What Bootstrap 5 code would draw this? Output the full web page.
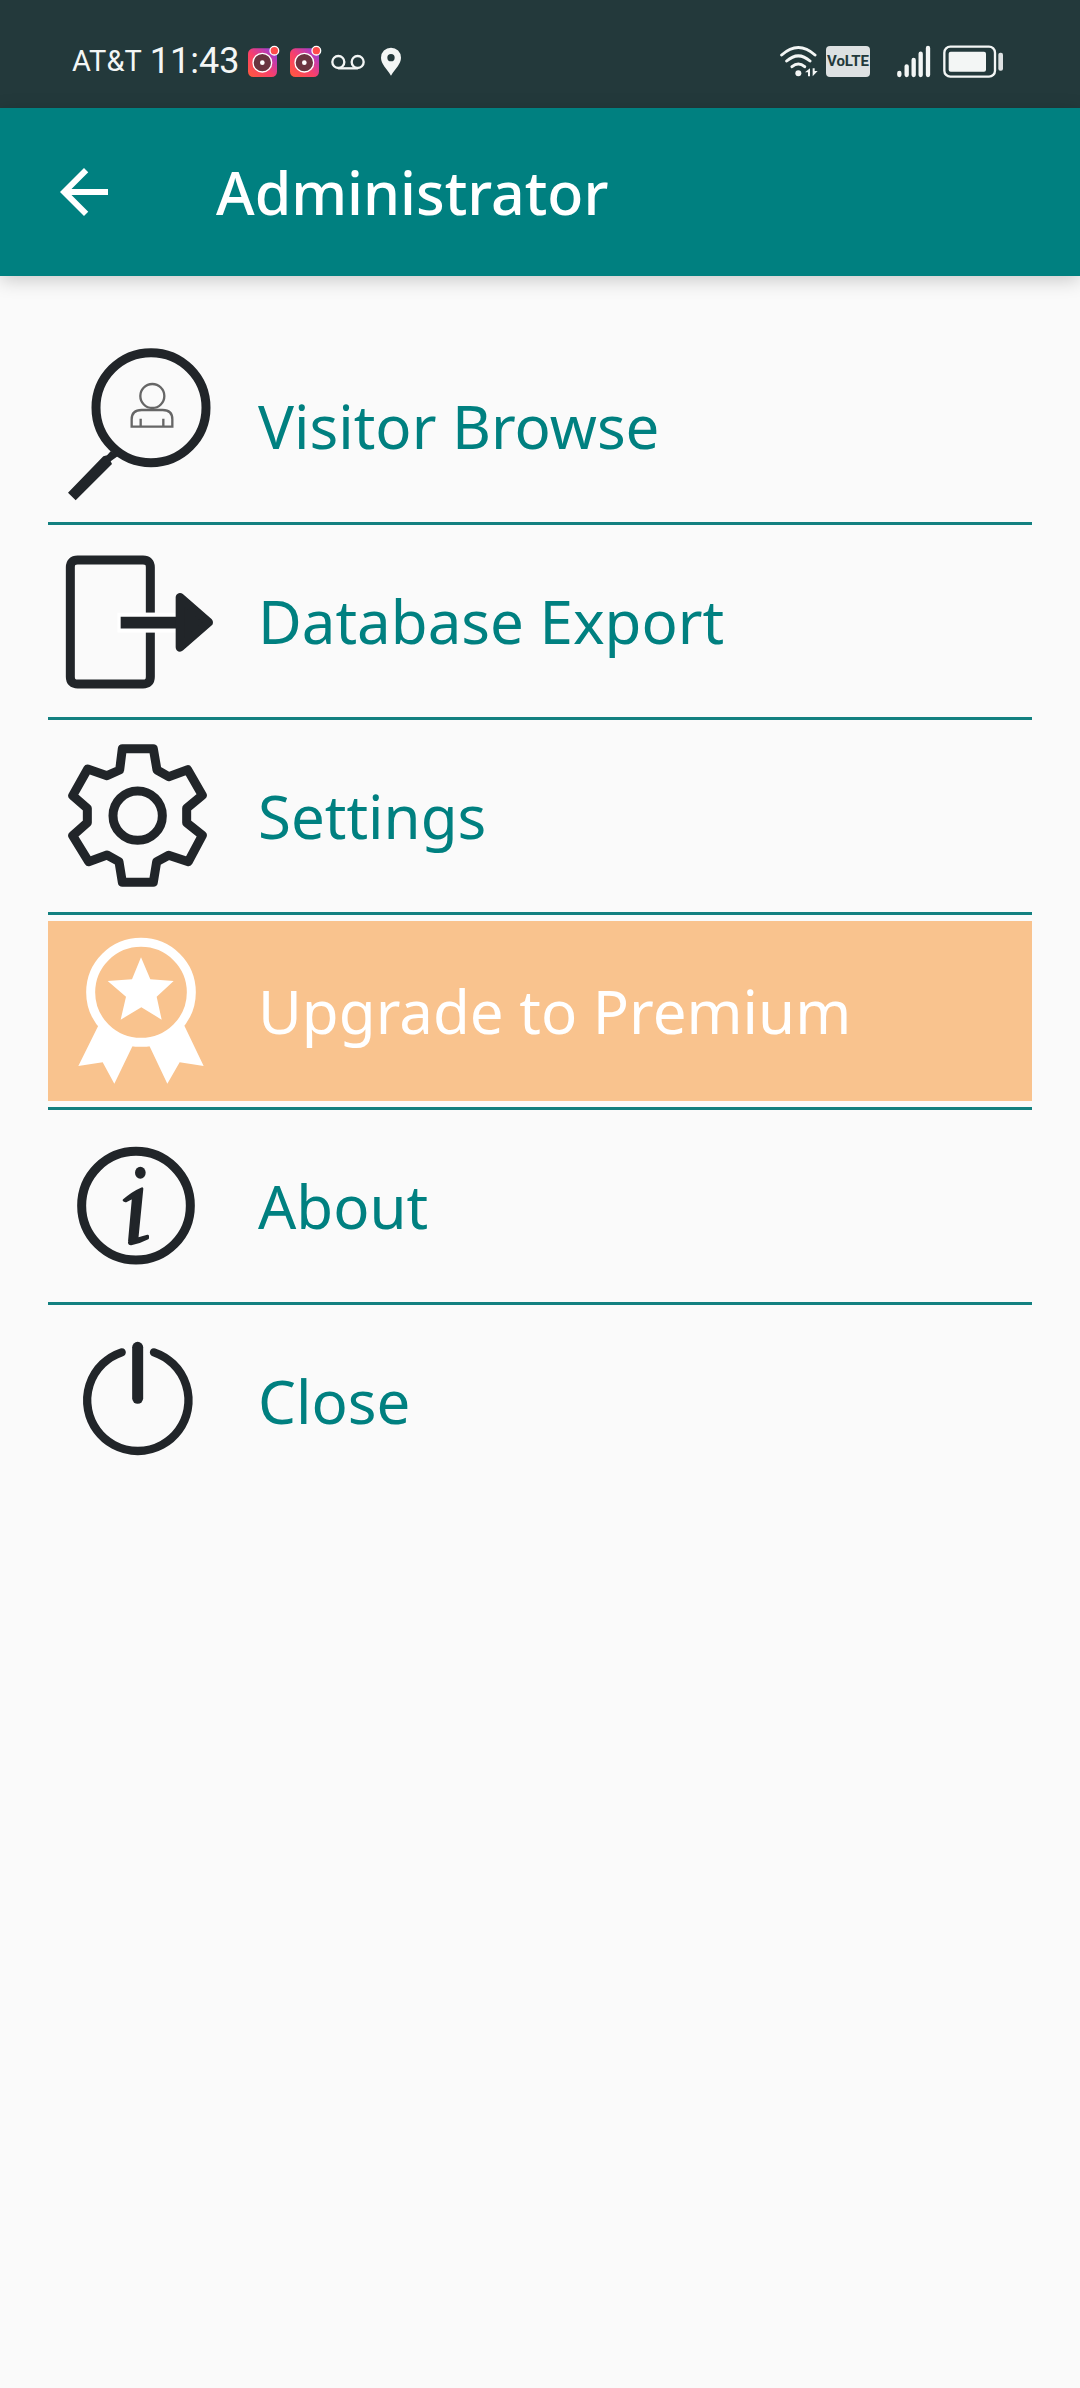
<!DOCTYPE html>
<html lang="en">
<head>
<meta charset="utf-8">
<meta name="viewport" content="width=device-width, initial-scale=1">
<title>Administrator</title>
<link rel="stylesheet" href="https://cdn.jsdelivr.net/npm/bootstrap@5.3.0/dist/css/bootstrap.min.css">
<style>
body { background: #fafafa; font-family: "Noto Sans", "Open Sans", sans-serif; }
.status-bar { height: 108px; padding: 14px 76px 0 72px; background: #23393b; color: #f3f6f5; font-family: Roboto, "Noto Sans", sans-serif; }
.status-bar svg { display: block; flex: none; }
.carrier { font-size: 29px; line-height: 40px; }
.clock { font-size: 36px; line-height: 40px; }
.volte { width: 44px; height: 31px; border-radius: 4px; background: #dde1e2; color: #23393b; font-size: 15px; line-height: 31px; font-weight: 700; text-align: center; }
.app-bar { height: 168px; padding: 0 48px; gap: 96px; background: #008080; box-shadow: 0 4px 18px rgba(0, 0, 0, .2); }
.back-btn { width: 72px; height: 72px; }
.page-title { font-size: 59px; line-height: 80px; font-weight: 500; }
.menu-list { margin: 54px 48px 0; }
.menu-entry { border-bottom: 3px solid #128080; padding: 6px 0; }
.menu-entry:last-child { border-bottom: 0; }
.menu-link { height: 180px; gap: 18px; color: #008080; font-size: 60px; line-height: 80px; }
.menu-link svg { width: 192px; height: 180px; flex: none; color: #212529; }
.menu-premium, .menu-premium svg { color: #fff; }
.menu-premium { background: #f9c38e; }
</style>
<script src="https://cdn.jsdelivr.net/npm/bootstrap@5.3.0/dist/js/bootstrap.bundle.min.js"></script>
</head>
<body>
<div class="status-bar d-flex align-items-center justify-content-between">
  <div class="d-flex align-items-center">
    <span class="carrier me-2">AT&amp;T</span>
    <span class="clock me-2">11:43</span>
    <svg class="me-2" width="34" height="33" viewBox="594 73 102 99" aria-hidden="true">
      <defs><linearGradient id="insta" x1="0" y1="1" x2="1" y2="0"><stop offset="0" stop-color="#ff5a3c"/><stop offset=".45" stop-color="#f8406a"/><stop offset=".75" stop-color="#c23bb0"/><stop offset="1" stop-color="#6a4ff0"/></linearGradient></defs>
      <g id="instaIcon"><rect x="597" y="83" width="87" height="86" rx="16" fill="url(#insta)"/><circle cx="640" cy="126" r="28" fill="#6b3440" stroke="#fff" stroke-width="4"/><circle cx="640" cy="126" r="7" fill="#fff"/><circle cx="676" cy="90" r="13" fill="#ff4b4b" stroke="#fff" stroke-width="4"/></g>
    </svg>
    <svg class="me-2" width="34" height="33" viewBox="594 73 102 99" aria-hidden="true"><use href="#instaIcon"/></svg>
    <svg class="me-3" width="34" height="33" viewBox="840 73 102 99" fill="none" stroke="#f3f6f5" stroke-width="7" aria-hidden="true"><circle cx="862" cy="124" r="18"/><circle cx="920" cy="124" r="18"/><path d="M862 143H920"/></svg>
    <svg width="20" height="33" viewBox="987 76 60 99" aria-hidden="true"><path fill="#f3f6f5" fill-rule="evenodd" d="M1017 84a30 30 0 0 0-30 30c0 20 17 31 30 54 13-23 30-34 30-54a30 30 0 0 0-30-30zm0 19a11 11 0 1 1 0 22 11 11 0 0 1 0-22z"/></svg>
  </div>
  <div class="d-flex align-items-center">
    <svg class="me-2" width="38" height="33" viewBox="62 73 114 99" fill="none" stroke="#f3f6f5" stroke-width="9" stroke-linecap="round" aria-hidden="true"><path d="M67 103Q117 58 167 103M82 121Q117 90 152 121M98 138Q117 122 136 138"/><circle cx="117" cy="158" r="9" fill="#f3f6f5" stroke="none"/><path stroke="none" fill="#f3f6f5" d="M152 143v24h-6v-12h-9zM160 167v-24h6v8h9z"/></svg>
    <span class="volte">VoLTE</span>
    <svg class="ms-4" width="40" height="33" viewBox="406 73 120 99" stroke="#f3f6f5" stroke-width="13" stroke-linecap="round" aria-hidden="true"><path d="M422 157v6M444 137v26M465 118v45M486 99v64M508 82v81"/></svg>
    <svg class="ms-2" width="62" height="33" viewBox="549 75 186 99" aria-hidden="true"><rect x="556" y="80" width="152" height="90" rx="18" fill="none" stroke="#f3f6f5" stroke-width="7"/><rect x="569" y="95" width="112" height="60" rx="6" fill="#f3f6f5"/><rect x="718" y="98" width="14" height="54" rx="6" fill="#dde1e2"/></svg>
  </div>
</div>
<header class="app-bar d-flex align-items-center">
  <button type="button" class="back-btn btn border-0 p-0" aria-label="Back"><svg class="d-block" width="72" height="72" viewBox="0 0 24 24" fill="#fff" aria-hidden="true"><path d="M20 11H7.830l5.590-5.590L12 4l-8 8 8 8 1.410-1.410L7.830 13H20z"/></svg></button>
  <h1 class="page-title text-white m-0">Administrator</h1>
</header>
<main>
<ul class="menu-list list-unstyled">
  <li class="menu-entry"><a href="#" class="menu-link d-flex align-items-center text-decoration-none">
    <svg viewBox="24 18 576 540" fill="none" stroke="currentColor" aria-hidden="true"><circle cx="333" cy="233" r="165" stroke-width="27"/><path stroke="none" fill="currentColor" d="M212 364L234 378L212 394L216 402L107 511L84 488L190 379L201 376z"/><g stroke="#666" stroke-width="7"><circle cx="337" cy="198" r="36"/><path d="M275 290V268Q275 240 305 240H368Q397 240 397 268V290zM302 266V290M370 266V290"/></g></svg>
    <span>Visitor Browse</span></a></li>
  <li class="menu-entry"><a href="#" class="menu-link d-flex align-items-center text-decoration-none">
    <svg viewBox="24 3 576 540" fill="none" stroke="currentColor" stroke-width="27" aria-hidden="true"><path d="M331 248V112Q331 90 309 90H113Q91 90 91 112V440Q91 462 113 462H309Q331 462 331 440V307"/><path stroke="#fff" stroke-width="59" d="M232 278H408"/><path stroke-width="35" d="M242 278H412"/><path fill="currentColor" stroke-width="26" stroke-linejoin="round" d="M420 202V352L506 277z"/></svg>
    <span>Database Export</span></a></li>
  <li class="menu-entry"><a href="#" class="menu-link d-flex align-items-center text-decoration-none">
    <svg viewBox="24 18 576 540" fill="none" stroke="currentColor" stroke-width="27" stroke-linejoin="round" aria-hidden="true"><path d="M247 86H340L351 150L386 170L443 149L487 226L440 265V308L487 346L445 425L386 406L350 425L340 487H247L237 425L201 405L146 425L98 347L142 308V265L98 227L143 147L201 167L239 150z"/><circle cx="293" cy="287" r="74"/></svg>
    <span>Settings</span></a></li>
  <li class="menu-entry"><a href="#" class="menu-link menu-premium d-flex align-items-center text-decoration-none">
    <svg viewBox="24 33 576 540" fill="currentColor" aria-hidden="true"><ellipse cx="303" cy="247" rx="151" ry="150" fill="none" stroke="currentColor" stroke-width="27"/><path d="M303 142L331 208L401 213L350 260L365 329L304 292L242 329L258 260L203 213L276 208zM177 343L115 468L188 457L223 521L278 407H328L382 521L419 457L491 468L431 343Q385 395 303 394Q220 391 177 343z"/></svg>
    <span>Upgrade to Premium</span></a></li>
  <li class="menu-entry"><a href="#" class="menu-link d-flex align-items-center text-decoration-none">
    <svg viewBox="24 -12 576 540" fill="none" stroke="currentColor" stroke-linecap="round" stroke-linejoin="round" aria-hidden="true"><circle cx="288" cy="257" r="163" stroke-width="27"/><ellipse cx="301" cy="158" rx="16" ry="18" fill="currentColor" stroke="none"/><path fill="currentColor" stroke-width="8" d="M252 241Q278 218 306 206L291 357L323 348V354Q298 367 273 372Q267 372 268 365L280 231L257 243z"/></svg>
    <span>About</span></a></li>
  <li class="menu-entry"><a href="#" class="menu-link d-flex align-items-center text-decoration-none">
    <svg viewBox="24 33 576 540" fill="none" stroke="currentColor" stroke-linecap="round" aria-hidden="true"><path stroke-width="25" d="M245 157A152 152 0 1 0 342 157"/><path stroke-width="33" d="M293 142V295"/></svg>
    <span>Close</span></a></li>
</ul>
</main>
</body>
</html>
